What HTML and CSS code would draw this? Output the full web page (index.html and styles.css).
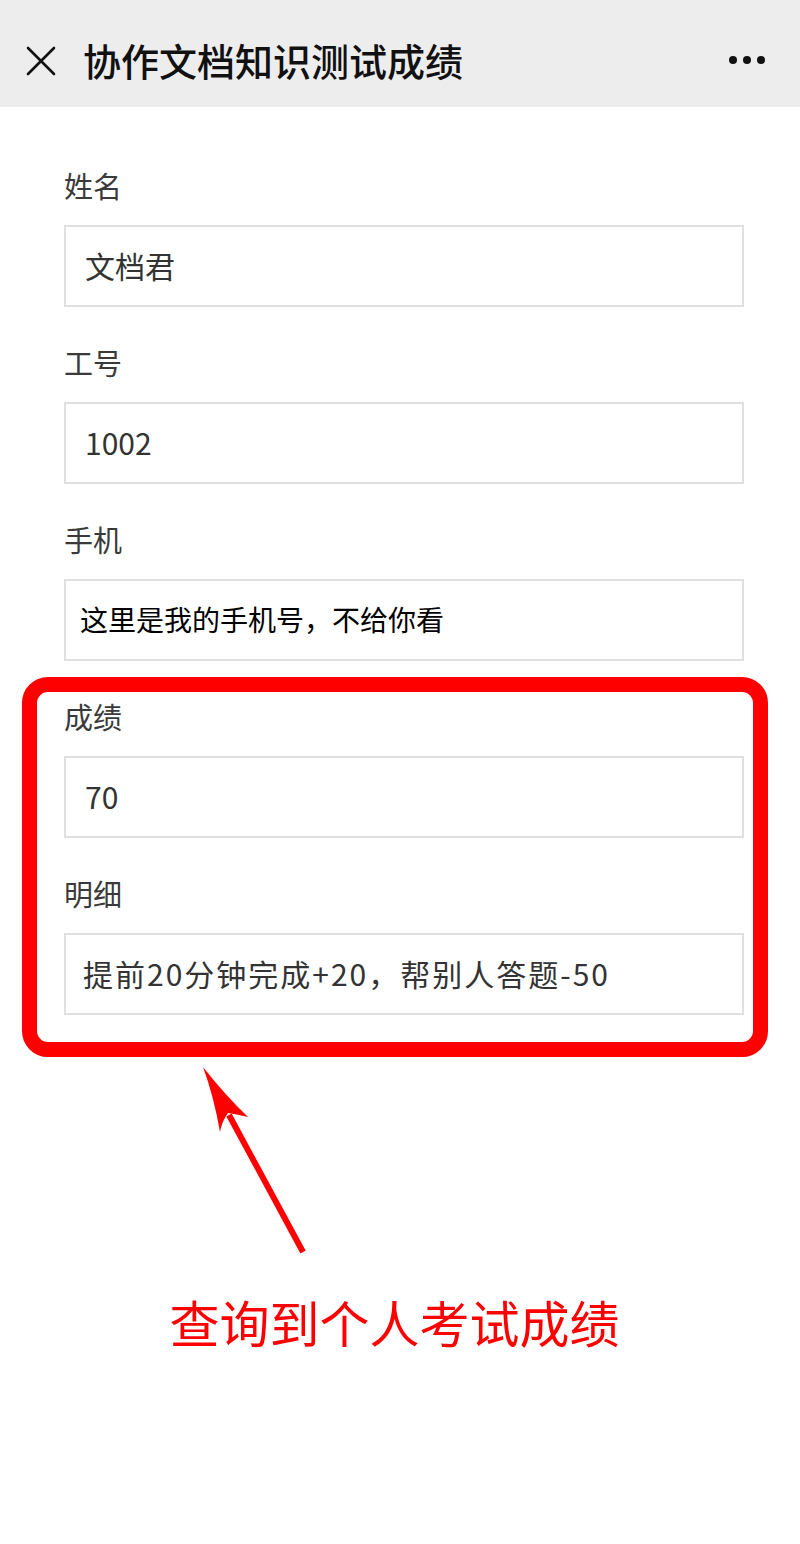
FILE: index.html
```html
<!DOCTYPE html>
<html lang="zh-CN">
<head>
<meta charset="utf-8">
<title>协作文档知识测试成绩</title>
<link rel="stylesheet" href="styles.css">
</head>
<body>
<header class="topbar">
  <svg class="close" width="30" height="30" viewBox="0 0 30 30"><path d="M2 2 L28 28 M28 2 L2 28" stroke="#111" stroke-width="2.6" stroke-linecap="round"/></svg>
  <h1 class="title">协作文档知识测试成绩</h1>
  <div class="more"><span></span><span></span><span></span></div>
</header>
<main class="form">
  <div class="field">
    <div class="label">姓名</div>
    <div class="input">文档君</div>
  </div>
  <div class="field">
    <div class="label">工号</div>
    <div class="input">1002</div>
  </div>
  <div class="field">
    <div class="label">手机</div>
    <div class="input input-phone">这里是我的手机号，不给你看</div>
  </div>
  <section class="highlight">
    <div class="field">
      <div class="label">成绩</div>
      <div class="input">70</div>
    </div>
    <div class="field">
      <div class="label">明细</div>
      <div class="input input-detail">提前20分钟完成+20，帮别人答题-50</div>
    </div>
  </section>
  <svg class="arrow" width="800" height="200" viewBox="0 0 800 200">
    <line x1="229" y1="58" x2="303" y2="195" stroke="#ff0000" stroke-width="6"/>
    <path d="M203 10 Q225 38 248 60 Q236 57 228 56 Q222 64 220 75 Q214 40 203 10 Z" fill="#ff0000"/>
  </svg>
  <p class="caption">查询到个人考试成绩</p>
</main>
</body>
</html>
```
FILE: styles.css
```css
* { box-sizing: border-box; }
html, body { margin: 0; padding: 0; background: #fff; }
body {
  width: 800px;
  min-height: 1544px;
  font-family: "Noto Sans CJK SC", "Noto Sans", sans-serif;
  color: #333;
}
.topbar {
  height: 107px;
  background: #ededed;
  display: flex;
  align-items: center;
  padding: 12px 0 0 26px;
}
.close { display: block; margin-top: 2px; }
.title {
  margin: 0 0 0 27px;
  font-size: 38px;
  font-weight: 500;
  color: #111;
  line-height: 1;
  flex: 1;
}
.more {
  display: flex;
  gap: 6px;
  margin-right: 35px;
}
.more span {
  width: 8px;
  height: 8px;
  border-radius: 50%;
  background: #111;
}
.form {
  display: flex;
  flex-direction: column;
  padding-top: 58px;
}
.field {
  margin: 0 56px 0 64px;
}
.field + .field { margin-top: 35px; }
.label {
  height: 40px;
  line-height: 40px;
  font-size: 29px;
  color: #3a3a3a;
  margin-bottom: 20px;
}
.input {
  height: 82px;
  border: 2px solid #e0e0e0;
  display: flex;
  align-items: center;
  padding: 0 0 3px 19px;
  font-size: 30px;
  color: #333;
  background: #fff;
}
.input-phone {
  font-size: 28px;
  color: #000;
  padding-left: 14px;
}
.input-detail {
  padding-left: 17px;
  letter-spacing: 2px;
}
.highlight {
  margin: 16px 32px 0 22px;
  border: 15px solid #ff0000;
  border-radius: 26px;
  padding: 4px 9px 27px 27px;
}
.highlight .field { margin: 0; }
.highlight .field + .field { margin-top: 35px; }
.arrow { display: block; }
.caption {
  margin: 34px 0 0 0;
  padding-right: 11px;
  text-align: center;
  font-size: 50px;
  line-height: 60px;
  color: #ff0000;
}
```
